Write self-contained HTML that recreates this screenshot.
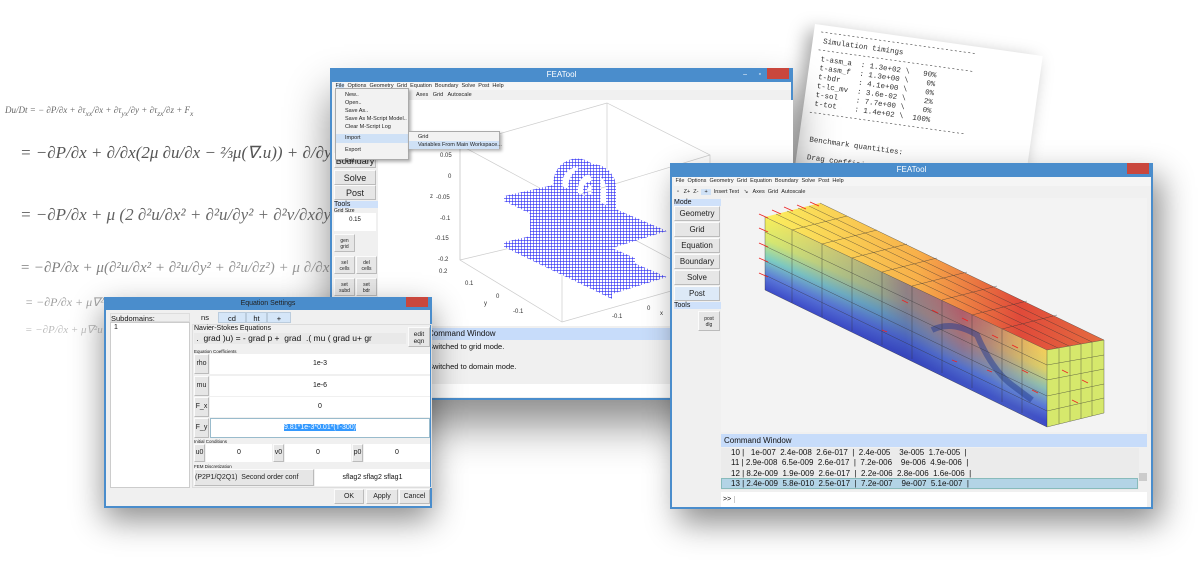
<!DOCTYPE html>
<html><head><meta charset="utf-8"><style>
*{box-sizing:border-box;margin:0;padding:0}
body{width:1202px;height:569px;background:#fff;position:relative;overflow:hidden;font-family:"Liberation Sans",sans-serif;color:#111}
.a{position:absolute}
.win{position:absolute;background:#f0f0f0;border:2px solid #4a8dcc;border-top:none}
.tb{position:absolute;left:-2px;right:-2px;top:0;height:14px;background:#4a8dcc;color:#fff;font-size:8px;text-align:center;line-height:14px}
.cls{position:absolute;right:4px;top:0;width:22px;height:11px;background:#c9473d}
.mi{font-size:5.5px;color:#222;white-space:nowrap}
.btn{position:absolute;background:#e6e6e6;border:1px solid #fbfbfb;border-right-color:#bbb;border-bottom-color:#bbb;text-align:center;color:#222}
.eq{font-family:"Liberation Serif",serif;font-style:italic;color:#444;white-space:nowrap;position:absolute}
</style></head><body>

<div class="a" style="left:0;top:95px;width:360px;height:270px;">
<div class="eq" style="left:5px;top:10px;font-size:9px;color:#666">Du/Dt = − ∂P/∂x + ∂τ<sub>xx</sub>/∂x + ∂τ<sub>yx</sub>/∂y + ∂τ<sub>zx</sub>/∂z + F<sub>x</sub></div>
<div class="eq" style="left:20px;top:48px;font-size:17px;color:#555">= −∂P/∂x + ∂/∂x(2μ ∂u/∂x − ⅔μ(∇.u)) + ∂/∂y (μ(∂u/∂y + ∂v/∂x)) + ∂/∂z (μ (∂u</div>
<div class="eq" style="left:20px;top:110px;font-size:17px;color:#555">= −∂P/∂x + μ (2 ∂²u/∂x² + ∂²u/∂y² + ∂²v/∂x∂y + ∂²u/∂z² + ∂²w/∂x∂z − ⅔ ∂/∂x (∇.u)) + F<sub>x</sub></div>
<div class="eq" style="left:20px;top:165px;font-size:15px;color:#666">= −∂P/∂x + μ(∂²u/∂x² + ∂²u/∂y² + ∂²u/∂z²) + μ ∂/∂x (∂u/∂x + ∂v/∂y + ∂w/∂z) − ⅔</div>
<div class="eq" style="left:25px;top:200px;font-size:12px;color:#777">= −∂P/∂x + μ∇²u + μ ∂/∂x (∇.u)</div>
<div class="eq" style="left:25px;top:228px;font-size:11px;color:#888">= −∂P/∂x + μ∇²u + ⅓μ ∂/∂x (∇.u)</div>
<div class="a" style="left:0;top:0;width:360px;height:270px;background:linear-gradient(170deg,rgba(255,255,255,0) 30%,rgba(255,255,255,.2) 60%,rgba(255,255,255,.85) 95%)"></div>
</div>

<div class="a" style="left:815px;top:24px;width:230px;height:150px;transform:rotate(8deg);transform-origin:0 0;background:#fff;box-shadow:-6px 6px 18px rgba(0,0,0,.35);font-family:'Liberation Mono',monospace;font-size:7.5px;color:#333;line-height:9px;padding:4px 6px;white-space:pre;overflow:hidden">-----------------------------------
 Simulation timings
-----------------------------------
 t-asm_a  : 1.3e+02 \   90%
 t-asm_f  : 1.3e+00 \    0%
 t-bdr    : 4.1e+00 \    0%
 t-lc_mv  : 3.6e-02 \    2%
 t-sol    : 7.7e+00 \    0%
 t-tot    : 1.4e+02 \  100%
-----------------------------------


 Benchmark quantities:

 Drag coefficient,      Cd
 Lift coefficient,      Cl</div>

<div class="win" style="left:330px;top:68px;width:463px;height:332px;box-shadow:0 25px 40px rgba(0,0,0,.45)">
 <div class="tb">FEATool<div class="cls"></div><div class="a" style="right:32px;top:0;color:#fff;font-size:7px">▫</div><div class="a" style="right:46px;top:0;color:#fff;font-size:7px">–</div></div>
 <div class="a mi" style="left:2px;top:14px;right:0;height:8px;background:#f5f5f5;line-height:8px">&nbsp;<span style="background:#cfe3f8">File</span>&nbsp; Options&nbsp; Geometry&nbsp; Grid&nbsp; Equation&nbsp; Boundary&nbsp; Solve&nbsp; Post&nbsp; Help</div>
 <div class="a mi" style="left:2px;top:22px;right:0;height:10px;line-height:10px;padding-left:82px">Axes &nbsp; Grid &nbsp; Autoscale</div>
 <div class="a" style="left:46px;top:32px;width:415px;height:226px;background:#fff">
  <svg width="415" height="226" viewBox="376 100 415 226" style="position:absolute;left:0;top:0">
   <defs><pattern id="mesh" width="3" height="3" patternUnits="userSpaceOnUse"><rect width="3" height="3" fill="#fff"/><path d="M0 0H3M0 0V3" stroke="#2a2af5" stroke-width="1.2"/></pattern></defs>
   <g stroke="#ccc" stroke-width=".7" fill="none">
    <path d="M458 145L605 103L708 155L708 280L560 322L458 260Z"/>
    <path d="M458 145L458 260M605 103L605 225L458 260M605 225L708 280M560 200L560 322"/>
    <path d="M458 145L560 200L708 155M560 200L605 225"/>
   </g>
   <g font-size="6" fill="#333" font-family="Liberation Sans">
    <text x="438" y="157">0.05</text><text x="446" y="178">0</text><text x="434" y="199">-0.05</text><text x="438" y="220">-0.1</text><text x="433" y="240">-0.15</text><text x="436" y="261">-0.2</text><text x="437" y="273">0.2</text><text x="463" y="285">0.1</text><text x="494" y="298">0</text><text x="511" y="313">-0.1</text><text x="610" y="318">-0.1</text><text x="645" y="310">0</text><text x="482" y="305">y</text><text x="658" y="315">x</text><text x="428" y="198">z</text>
   </g>
   <polygon points="502,242 555,230 665,277 610,294 610,299 502,247" fill="url(#mesh)"/>
   <polygon points="528,212 633,258 633,285 528,240" fill="url(#mesh)"/>
   <path d="M556 215V182A19 19 0 0 1 594 182V222" fill="none" stroke="url(#mesh)" stroke-width="9"/>
   <polygon points="502,196 555,184 665,231 610,248 610,253 502,201" fill="url(#mesh)"/>
   <path d="M571 222V188A19 19 0 0 1 609 188V232" fill="none" stroke="url(#mesh)" stroke-width="10"/>
   <circle cx="590" cy="190" r="7" fill="none" stroke="url(#mesh)" stroke-width="4"/>
  </svg>
 </div>
 <div class="btn" style="left:2px;top:85px;width:42px;height:15px;font-size:9px;line-height:15px">Boundary</div>
 <div class="btn" style="left:2px;top:102px;width:42px;height:15px;font-size:9px;line-height:15px">Solve</div>
 <div class="btn" style="left:2px;top:117px;width:42px;height:15px;font-size:9px;line-height:15px">Post</div>
 <div class="a" style="left:2px;top:133px;width:44px;height:7px;background:#cfe1fa;font-size:7px;line-height:7px">Tools</div>
 <div class="a" style="left:2px;top:140px;font-size:5px">Grid Size</div>
 <div class="a" style="left:2px;top:145px;width:42px;height:18px;background:#fff;font-size:6px;text-align:center;line-height:14px">0.15</div>
 <div class="btn" style="left:2px;top:166px;width:21px;height:18px;font-size:5px;line-height:6px;padding-top:3px">gen<br>grid</div>
 <div class="btn" style="left:2px;top:188px;width:21px;height:18px;font-size:5px;line-height:6px;padding-top:3px">sel<br>cells</div>
 <div class="btn" style="left:24px;top:188px;width:21px;height:18px;font-size:5px;line-height:6px;padding-top:3px">del<br>cells</div>
 <div class="btn" style="left:2px;top:210px;width:21px;height:18px;font-size:5px;line-height:6px;padding-top:3px">set<br>subd</div>
 <div class="btn" style="left:24px;top:210px;width:21px;height:18px;font-size:5px;line-height:6px;padding-top:3px">set<br>bdr</div>
 <div class="a" style="left:46px;top:260px;width:415px;height:12px;background:#c7dcfa;font-size:8px;line-height:12px;padding-left:50px">Command Window</div>
 <div class="a" style="left:46px;top:274px;font-size:7.5px;padding-left:50px;line-height:10px">Switched to grid mode.<br><br>Switched to domain mode.</div>
 <div class="a" style="left:46px;top:316px;width:415px;height:13px;background:#fff"></div>
 <div class="a mi" style="left:3px;top:20px;width:74px;height:72px;background:#f2f2f2;border:1px solid #aaa;box-shadow:2px 2px 3px rgba(0,0,0,.3);line-height:8px;padding:2px 0 0 9px">New..<br>Open..<br>Save As..<br>Save As M-Script Model..<br>Clear M-Script Log<br><div style="margin:3px 0 0 -9px;padding-left:9px;background:#cfe1f6;height:9px;line-height:9px">Import</div><div style="margin-top:3px">Export</div><div style="margin-top:3px">Exit</div></div>
 <div class="a mi" style="left:76px;top:63px;width:92px;height:18px;background:#f2f2f2;border:1px solid #aaa;box-shadow:2px 2px 3px rgba(0,0,0,.3);line-height:8px;padding:1px 0 0 0"><div style="padding-left:9px">Grid</div><div style="background:#cfe1f6;padding-left:9px">Variables From Main Workspace...</div></div>
</div>

<div class="win" style="left:104px;top:297px;width:328px;height:211px;box-shadow:0 12px 30px rgba(0,0,0,.45)">
 <div class="tb" style="height:13px;line-height:13px;font-size:7px;color:#222">Equation Settings<div class="cls" style="height:10px"></div></div>
 <div class="a" style="left:4px;top:16px;width:80px;height:9px;font-size:7.5px;line-height:9px;border:1px solid #ddd;background:#eee">Subdomains:</div>
 <div class="a" style="left:4px;top:25px;width:80px;height:166px;background:#fff;border:1px solid #ccc;font-size:7px;padding:1px 3px">1</div>
 <div class="a" style="left:86px;top:15px;width:26px;height:11px;background:#f0f0f0;font-size:7.5px;text-align:center;line-height:11px">ns</div>
 <div class="a" style="left:112px;top:15px;width:28px;height:11px;background:#d5e6f8;font-size:7.5px;text-align:center;line-height:11px;border:1px solid #bcd">cd</div>
 <div class="a" style="left:140px;top:15px;width:21px;height:11px;background:#d5e6f8;font-size:7.5px;text-align:center;line-height:11px;border:1px solid #bcd">ht</div>
 <div class="a" style="left:161px;top:15px;width:24px;height:11px;background:#d5e6f8;font-size:7.5px;text-align:center;line-height:11px;border:1px solid #bcd">+</div>
 <div class="a" style="left:86px;top:27px;width:240px;height:164px;border:1px solid #ddd"></div>
 <div class="a" style="left:88px;top:28px;font-size:7px">Navier-Stokes Equations</div>
 <div class="a" style="left:88px;top:36px;width:212px;height:11px;background:#e9e9e9;font-size:8.5px;line-height:11px;white-space:nowrap;overflow:hidden">&nbsp;.&nbsp; grad )u) = - grad p +&nbsp; grad&nbsp; .( mu ( grad u+ gr</div>
 <div class="btn" style="left:302px;top:30px;width:22px;height:20px;font-size:6.5px;line-height:7px;padding-top:3px">edit<br>eqn</div>
 <div class="a" style="left:88px;top:52px;font-size:4.5px">Equation Coefficients</div>
 <div class="btn" style="left:88px;top:57px;width:15px;height:20px;font-size:7px;line-height:18px">rho</div>
 <div class="a" style="left:104px;top:57px;width:220px;height:20px;background:#fff;font-size:7px;text-align:center;line-height:20px">1e-3</div>
 <div class="btn" style="left:88px;top:79px;width:15px;height:20px;font-size:7px;line-height:18px">mu</div>
 <div class="a" style="left:104px;top:79px;width:220px;height:20px;background:#fff;font-size:7px;text-align:center;line-height:20px">1e-6</div>
 <div class="btn" style="left:88px;top:100px;width:15px;height:20px;font-size:7px;line-height:18px">F_x</div>
 <div class="a" style="left:104px;top:100px;width:220px;height:20px;background:#fff;font-size:7px;text-align:center;line-height:20px">0</div>
 <div class="btn" style="left:88px;top:121px;width:15px;height:20px;font-size:7px;line-height:18px">F_y</div>
 <div class="a" style="left:104px;top:121px;width:220px;height:20px;background:#fff;border:1px solid #9bc;font-size:7px;text-align:center;line-height:18px"><span style="background:#3399ff;color:#fff">9.81*1e-3*0.01*(T-300)</span></div>
 <div class="a" style="left:88px;top:142px;font-size:4.5px">Initial Conditions</div>
 <div class="btn" style="left:88px;top:147px;width:11px;height:18px;font-size:7px;line-height:16px">u0</div>
 <div class="a" style="left:100px;top:147px;width:66px;height:18px;background:#fff;font-size:7px;text-align:center;line-height:18px">0</div>
 <div class="btn" style="left:167px;top:147px;width:11px;height:18px;font-size:7px;line-height:16px">v0</div>
 <div class="a" style="left:179px;top:147px;width:66px;height:18px;background:#fff;font-size:7px;text-align:center;line-height:18px">0</div>
 <div class="btn" style="left:246px;top:147px;width:11px;height:18px;font-size:7px;line-height:16px">p0</div>
 <div class="a" style="left:258px;top:147px;width:66px;height:18px;background:#fff;font-size:7px;text-align:center;line-height:18px">0</div>
 <div class="a" style="left:88px;top:167px;font-size:4.5px">FEM Discretization</div>
 <div class="btn" style="left:88px;top:172px;width:120px;height:17px;font-size:7px;line-height:15px;text-align:left;white-space:nowrap;overflow:hidden">(P2P1/Q2Q1)&nbsp; Second order conf</div>
 <div class="a" style="left:209px;top:172px;width:115px;height:17px;background:#fff;font-size:7px;text-align:center;line-height:17px">sflag2 sflag2 sflag1</div>
 <div class="btn" style="left:228px;top:192px;width:30px;height:15px;font-size:7px;line-height:13px">OK</div>
 <div class="btn" style="left:260px;top:192px;width:32px;height:15px;font-size:7px;line-height:13px">Apply</div>
 <div class="btn" style="left:293px;top:192px;width:31px;height:15px;font-size:7px;line-height:13px">Cancel</div>
</div>

<div class="win" style="left:670px;top:163px;width:483px;height:346px;box-shadow:8px 14px 30px rgba(0,0,0,.45)">
 <div class="tb">FEATool<div class="cls"></div></div>
 <div class="a mi" style="left:2px;top:14px;right:0;height:9px;background:#f5f5f5;line-height:9px">&nbsp;File&nbsp; Options&nbsp; Geometry&nbsp; Grid&nbsp; Equation&nbsp; Boundary&nbsp; Solve&nbsp; Post&nbsp; Help</div>
 <div class="a mi" style="left:2px;top:23px;right:0;height:12px;line-height:12px">&nbsp; ▫ &nbsp; Z+ &nbsp;Z- &nbsp;<span style="background:#cfe1f6;padding:0 3px">+</span>&nbsp; Insert Text &nbsp; ↘ &nbsp; Axes &nbsp;Grid &nbsp;Autoscale</div>
 <div class="a" style="left:2px;top:36px;width:47px;height:7px;background:#cfe1fa;font-size:7px;line-height:7px">Mode</div>
 <div class="btn" style="left:2px;top:43px;width:46px;height:15px;font-size:8px;line-height:14px">Geometry</div>
 <div class="btn" style="left:2px;top:59px;width:46px;height:15px;font-size:8px;line-height:14px">Grid</div>
 <div class="btn" style="left:2px;top:75px;width:46px;height:15px;font-size:8px;line-height:14px">Equation</div>
 <div class="btn" style="left:2px;top:91px;width:46px;height:15px;font-size:8px;line-height:14px">Boundary</div>
 <div class="btn" style="left:2px;top:107px;width:46px;height:15px;font-size:8px;line-height:14px">Solve</div>
 <div class="btn" style="left:2px;top:123px;width:46px;height:15px;font-size:8px;line-height:14px;background:#dde9f7">Post</div>
 <div class="a" style="left:2px;top:139px;width:47px;height:7px;background:#cfe1fa;font-size:7px;line-height:7px">Tools</div>
 <div class="btn" style="left:26px;top:148px;width:22px;height:20px;font-size:5px;line-height:6px;padding-top:4px">post<br>dlg</div>
 <div class="a" style="left:49px;top:35px;width:426px;height:234px;background:#f3f3f3">
  <svg width="426" height="234" viewBox="719 198 426 234" style="position:absolute;left:0;top:0">
   <defs>
    <linearGradient id="fr" gradientUnits="userSpaceOnUse" x1="763" y1="217" x2="735" y2="277"><stop offset="0" stop-color="#f8ef5a"/><stop offset=".3" stop-color="#d8ea6e"/><stop offset=".55" stop-color="#7fcfc0"/><stop offset=".8" stop-color="#5a78d8"/><stop offset="1" stop-color="#3c4bc8"/></linearGradient>
    <linearGradient id="rd" gradientUnits="userSpaceOnUse" x1="763" y1="0" x2="1045" y2="0"><stop offset="0" stop-color="#f33" stop-opacity="0"/><stop offset=".4" stop-color="#f44" stop-opacity="0"/><stop offset=".7" stop-color="#e33" stop-opacity=".8"/><stop offset="1" stop-color="#e55" stop-opacity=".2"/></linearGradient>
    <linearGradient id="rdv" gradientUnits="userSpaceOnUse" x1="763" y1="217" x2="735" y2="277"><stop offset="0" stop-color="#fff" stop-opacity="1"/><stop offset=".55" stop-color="#fff" stop-opacity=".6"/><stop offset=".8" stop-color="#fff" stop-opacity="0"/></linearGradient>
    <mask id="mk"><rect x="700" y="190" width="450" height="250" fill="url(#rdv)"/></mask>
    <linearGradient id="tp" gradientUnits="userSpaceOnUse" x1="763" y1="0" x2="1102" y2="0"><stop offset="0" stop-color="#fbef5e"/><stop offset=".45" stop-color="#f8b04a"/><stop offset=".75" stop-color="#e04a3a"/><stop offset="1" stop-color="#e56c40"/></linearGradient>
    <linearGradient id="bl" gradientUnits="userSpaceOnUse" x1="763" y1="0" x2="1045" y2="0"><stop offset="0" stop-color="#4a5ad0" stop-opacity="0"/><stop offset=".5" stop-color="#3040b0" stop-opacity=".5"/><stop offset=".8" stop-color="#4a6ac0" stop-opacity=".3"/><stop offset="1" stop-color="#9c9" stop-opacity="0"/></linearGradient>
   </defs>
   <polygon points="763,217 818,203 1102,340 1045,350" fill="url(#tp)"/>
   <polygon points="763,217 1045,350 1045,427 763,290" fill="url(#fr)"/>
   <polygon points="763,217 1045,350 1045,427 763,290" fill="url(#rd)" mask="url(#mk)"/>
   <polygon points="763,217 1045,350 1045,427 763,290" fill="url(#bl)"/>
   <polygon points="1045,350 1102,340 1102,413 1045,427" fill="#d6e86c"/>
   <path d="M930 330Q950 320 975 335Q990 370 1010 385L1030 400" stroke="#223a90" stroke-width="6" fill="none" opacity=".5"/>
   <g stroke="#333" stroke-width=".5" fill="none" opacity=".7">
    <path d="M763 217L1045 350L1045 427L763 290ZM818 203L1102 340L1102 413L1045 427M1045 350L1102 340"/>
    <path d="M763 232L1045 365M763 246L1045 380M763 261L1045 396M763 275L1045 411"/>
    <path d="M774 214L1056 348M785 211L1067 346M796 208L1079 344M807 206L1090 342"/>
    <path d="M1057 348V424M1068 346V421M1079 344V419M1090 342V416M1045 365L1102 355M1045 380L1102 369M1045 396L1102 384M1045 411L1102 398"/>
    <path d="M790 230V303M820 244V317M850 258V331M880 272V345M910 286V359M940 300V373M970 315V388M1000 329V402M1020 339V413"/>
    <path d="M790 230L845 216M820 244L875 230M850 258L905 244M880 272L935 258M910 286L965 272M940 300L995 286M970 315L1025 301M1000 329L1055 315"/>
   </g>
   <g stroke="#e22" stroke-width=".8">
    <path d="M757 214L766 218M757 228L766 232M757 243L766 247M757 258L766 262M757 273L766 277M770 210L779 214M782 207L791 211M795 205L804 209M808 202L817 206"/>
    <path d="M900 300l6 3M930 310l6 3M960 318l6 3M990 335l6 3M1010 345l6 3M1020 370l6 3M1030 390l6 3M1060 370l6 3M1080 380l6 3M1070 400l6 3M880 330l5 2M950 360l5 2M985 370l5 2"/>
   </g>
  </svg>
 </div>
 <div class="a" style="left:49px;top:271px;width:426px;height:13px;background:#c7dcfa;font-size:8px;line-height:13px;padding-left:3px">Command Window</div>
 <div class="a" style="left:49px;top:285px;width:426px;height:42px;background:#ebebeb"></div>
 <div class="a" style="left:49px;top:315px;width:417px;height:11px;background:#b3d4e6;border:1px solid #8bb"></div>
 <div class="a" style="left:467px;top:285px;width:8px;height:42px;background:#f0f0f0"><div style="margin-top:25px;height:8px;background:#ccc"></div></div>
 <div class="a" style="left:49px;top:285px;font-size:8px;line-height:10.4px;white-space:pre;padding-left:10px">10 |   1e-007  2.4e-008  2.6e-017  |  2.4e-005    3e-005  1.7e-005  |
11 | 2.9e-008  6.5e-009  2.6e-017  |  7.2e-006    9e-006  4.9e-006  |
12 | 8.2e-009  1.9e-009  2.6e-017  |  2.2e-006  2.8e-006  1.6e-006  |
13 | 2.4e-009  5.8e-010  2.5e-017  |  7.2e-007    9e-007  5.1e-007  |</div>
 <div class="a" style="left:49px;top:329px;width:426px;height:15px;background:#fff;font-size:7px;line-height:15px;padding-left:2px"><span style="border-right:1px solid #ccc;padding-right:3px">&gt;&gt;</span></div>
</div>

</body></html>
